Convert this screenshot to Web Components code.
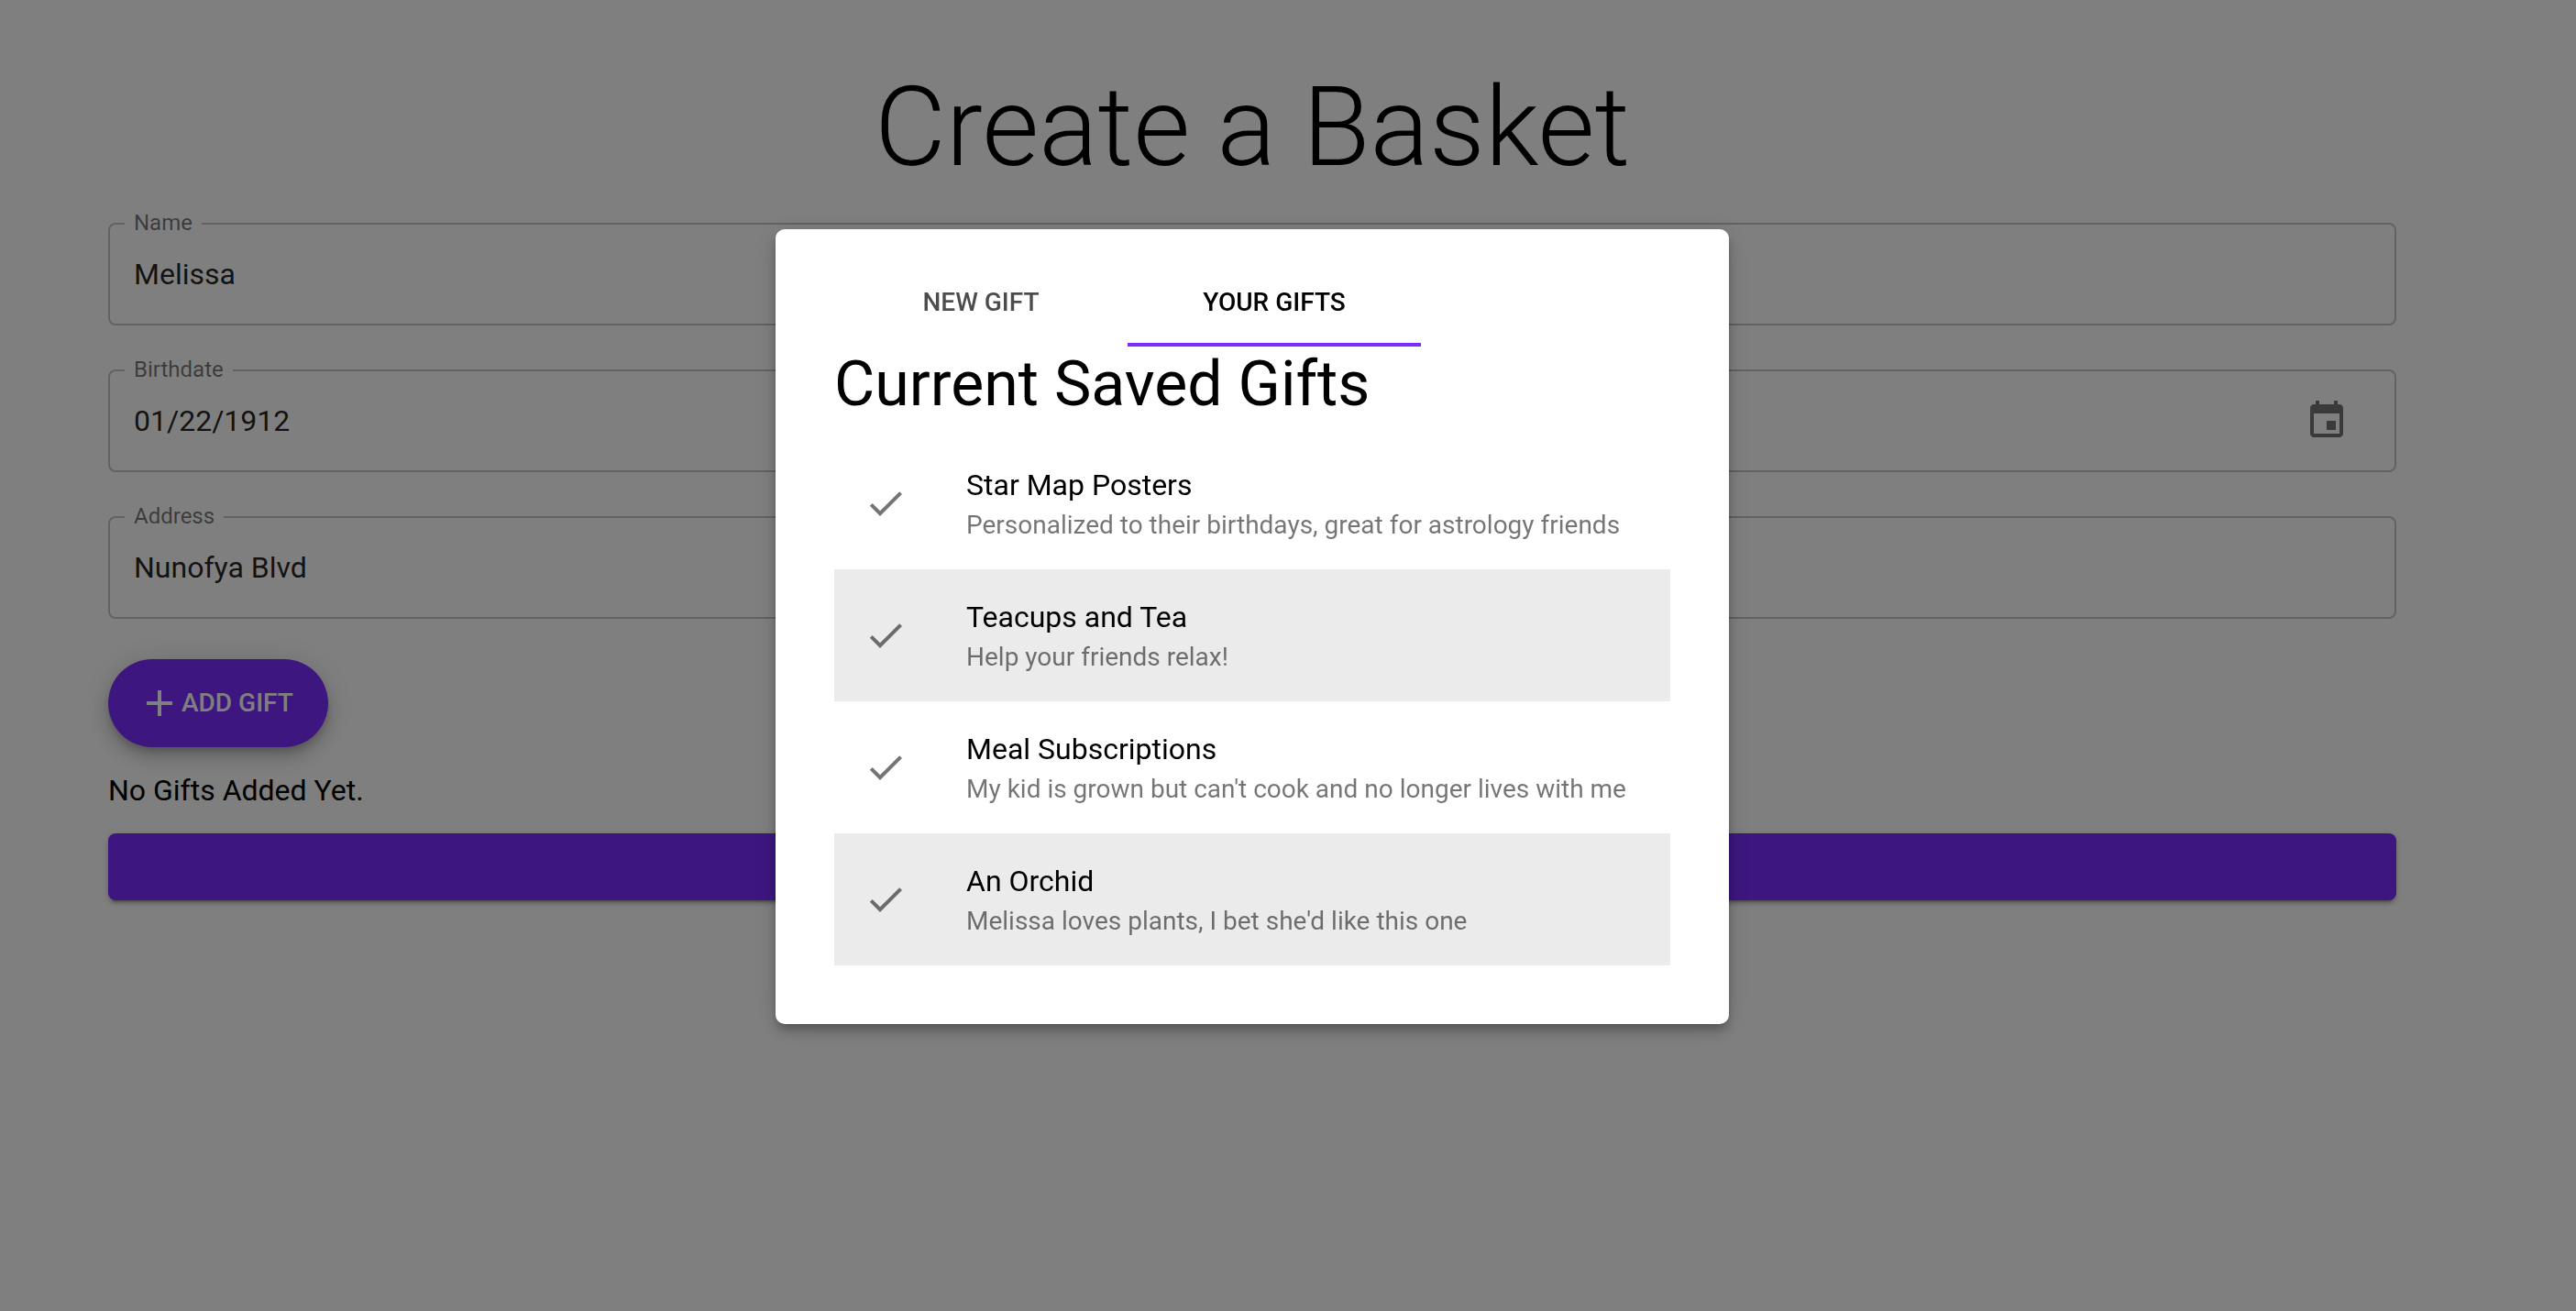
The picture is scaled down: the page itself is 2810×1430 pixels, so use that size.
<!DOCTYPE html>
<html lang="en">
<head>
<meta charset="utf-8">
<title>Create a Basket</title>
<style>
  html, body { margin: 0; height: 100%; background: #fff; }
  body {
    font-family: Roboto, sans-serif;
    font-size: 32px;
    line-height: 48px;
    color: #000;
    --primary: #7b2cff;
    --muted: rgba(0, 0, 0, .54);
    --gutters: 196px;
    --gutter-start: 118px;
  }
</style>
</head>
<body>
<basket-page>
  <outlined-field label="Name" value="Melissa"></outlined-field>
  <outlined-field label="Birthdate" value="01/22/1912" picker></outlined-field>
  <outlined-field label="Address" value="Nunofya Blvd"></outlined-field>
</basket-page>
<gift-modal>
  <gift-item>Star Map Posters<span slot="note">Personalized to their birthdays, great for astrology friends</span></gift-item>
  <gift-item shaded>Teacups and Tea<span slot="note">Help your friends relax!</span></gift-item>
  <gift-item>Meal Subscriptions<span slot="note">My kid is grown but can't cook and no longer lives with me</span></gift-item>
  <gift-item shaded>An Orchid<span slot="note">Melissa loves plants, I bet she'd like this one</span></gift-item>
</gift-modal>

<script>
const define = (name, render) => customElements.define(name, class extends HTMLElement {
  constructor() {
    super();
    this.attachShadow({ mode: 'open' });
  }
  connectedCallback() {
    this.shadowRoot.innerHTML = render(this);
  }
});

define('outlined-field', el => `
  <style>
    :host { display: block; }
    fieldset {
      margin: 0; min-width: 0; padding: 0 26px 12px;
      border: 2px solid rgba(0, 0, 0, .23); border-radius: 8px;
      display: block;
    }
    legend { margin-left: -10px; padding: 0 10px 2px; font-size: 24px; line-height: 24px; color: var(--muted); }
    label { display: block; }
    .row { display: flex; }
    input {
      flex: 1; min-width: 0; height: 84px; box-sizing: border-box; padding: 0; margin: 0;
      border: 0; outline: 0; background: none; font: inherit; color: rgba(0, 0, 0, .87);
    }
    button { width: 96px; border: 0; padding: 0; background: none; color: var(--muted);
      display: flex; align-items: center; justify-content: center; }
    svg { width: 48px; height: 48px; fill: currentColor; }
  </style>
  <fieldset>
    <legend><label for="box">${el.getAttribute('label')}</label></legend>
    <div class="row">
      <input id="box" type="text" value="${el.getAttribute('value')}">
      ${el.hasAttribute('picker') ? `<button type="button" aria-label="Change date">
        <svg viewBox="0 0 24 24"><path d="M17 12h-5v5h5v-5zM16 1v2H8V1H6v2H5c-1.11 0-1.99.9-1.99 2L3 19c0 1.1.89 2 2 2h14c1.1 0 2-.9 2-2V5c0-1.1-.9-2-2-2h-1V1h-2zm3 18H5V8h14v11z"/></svg>
      </button>` : ''}
    </div>
  </fieldset>`);

define('basket-page', () => `
  <style>
    :host { display: block; padding: 67px var(--gutters) 0 var(--gutter-start); }
    h1 { margin: 0 0 20px; font-size: 120px; line-height: 144px; font-weight: 300; text-align: center; }
    .fields { display: flex; flex-direction: column; gap: 36px; }
    form { display: flex; flex-direction: column; }
    button { border: 0; background: var(--primary); color: #fff; font: 500 28px/48px Roboto, sans-serif; }
    .add {
      align-self: flex-start; display: flex; align-items: center;
      min-width: 240px; height: 96px; margin-top: 44px; padding: 0 32px; border-radius: 48px;
      box-shadow: 0 6px 10px -2px rgba(0,0,0,.2), 0 12px 20px rgba(0,0,0,.14), 0 2px 36px rgba(0,0,0,.12);
    }
    .add svg { width: 48px; height: 48px; fill: currentColor; }
    p { margin: 23px 0; }
    .submit {
      height: 73px; border-radius: 8px;
      box-shadow: 0 6px 2px -4px rgba(0,0,0,.2), 0 4px 4px rgba(0,0,0,.14), 0 2px 10px rgba(0,0,0,.12);
    }
  </style>
  <h1>Create a Basket</h1>
  <form>
    <div class="fields"><slot></slot></div>
    <button class="add" type="button">
      <svg viewBox="0 0 24 24"><path d="M19 13h-6v6h-2v-6H5v-2h6V5h2v6h6v2z"/></svg>ADD GIFT
    </button>
    <p>No Gifts Added Yet.</p>
    <button class="submit" type="button" aria-label="Create basket"></button>
  </form>`);

define('gift-modal', () => `
  <style>
    :host {
      position: fixed; inset: 0; overflow: auto; box-sizing: border-box;
      padding: 250px var(--gutters) 0 var(--gutter-start);
      display: flex; justify-content: center; align-items: flex-start;
      background: rgba(0, 0, 0, .5);
    }
    section {
      box-sizing: border-box; width: 1040px; max-width: 100%; padding: 32px 64px 64px;
      background: #fff; border-radius: 10px;
      box-shadow: 0 6px 10px -2px rgba(0,0,0,.2), 0 10px 16px rgba(0,0,0,.14), 0 2px 28px rgba(0,0,0,.12);
    }
    nav { display: flex; }
    nav button {
      width: 320px; height: 96px; padding: 0; border: 0; background: none;
      font: 500 28px/48px Roboto, sans-serif; color: rgba(0, 0, 0, .7);
    }
    nav button[aria-selected=true] { color: #000; box-shadow: inset 0 -4px var(--primary); }
    h2 { margin: 0 0 16px; font-size: 68px; line-height: 83px; font-weight: 400; }
  </style>
  <section role="dialog" aria-labelledby="title">
    <nav role="tablist">
      <button type="button" role="tab" aria-selected="false">NEW GIFT</button>
      <button type="button" role="tab" aria-selected="true">YOUR GIFTS</button>
    </nav>
    <h2 id="title">Current Saved Gifts</h2>
    <div role="list"><slot></slot></div>
  </section>`);

define('gift-item', () => `
  <style>
    :host { display: flex; align-items: center; padding: 28px 32px; }
    :host([shaded]) { background: rgba(0, 0, 0, .08); }
    svg { flex: none; width: 48px; height: 48px; margin-right: 64px; fill: currentColor; color: var(--muted); }
    .note { font-size: 28px; line-height: 40px; color: var(--muted); }
  </style>
  <svg viewBox="0 0 24 24"><path d="M9 16.17L4.83 12l-1.42 1.41L9 19 21 7l-1.41-1.41z"/></svg>
  <div>
    <div><slot></slot></div>
    <div class="note"><slot name="note"></slot></div>
  </div>`);

document.querySelectorAll('gift-item').forEach(item => item.setAttribute('role', 'listitem'));
</script>
</body>
</html>
